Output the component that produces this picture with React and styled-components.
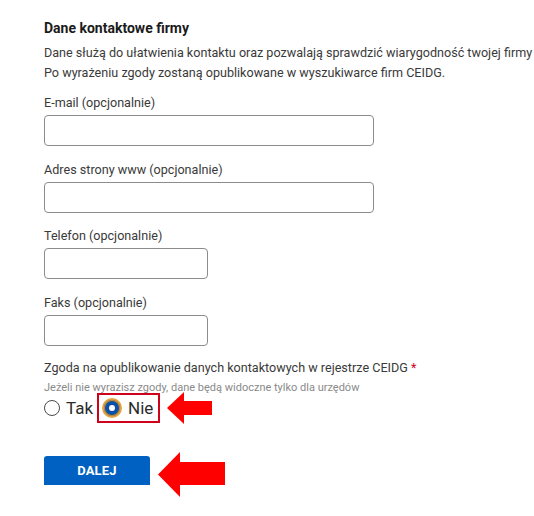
import React from "react";
import styled, { createGlobalStyle } from "styled-components";

const Global = createGlobalStyle`
  html, body { margin: 0; padding: 0; background: #fff; }
  body { font-family: Roboto, "Noto Sans", Arial, sans-serif; color: #333; }
  * { box-sizing: border-box; }
`;

const Page = styled.div`
  padding: 18px 0 0 44px;
  width: 534px;
  overflow: hidden;
`;

const Heading = styled.h2`
  margin: 0;
  font-size: 14px;
  line-height: 20px;
  font-weight: 700;
  color: #1b1b1b;
`;

const Intro = styled.p`
  margin: 5px 0 0;
  font-size: 12.6px;
  line-height: 20px;
  color: #3a3a3a;
  white-space: nowrap;
`;

const Field = styled.div`
  display: flex;
  flex-direction: column;
  margin-top: ${(p) => p.$top}px;
`;

const Label = styled.label`
  font-size: 12.6px;
  line-height: 20px;
  color: #3a3a3a;
  margin-bottom: 2px;
`;

const Input = styled.input`
  width: ${(p) => (p.$short ? 164 : 330)}px;
  height: 31px;
  border: 1px solid #8c8c8c;
  border-radius: 4px;
  background: #fff;
  font: inherit;
  padding: 0 8px;
`;

const Required = styled.span`
  color: #d0021b;
`;

const Hint = styled.div`
  font-size: 11px;
  line-height: 16px;
  color: #8a8a8a;
`;

const RadioRow = styled.div`
  display: flex;
  align-items: center;
  height: 31px;
  margin-top: -4px;
`;

const Option = styled.label`
  display: flex;
  align-items: center;
  gap: 6px;
  font-size: 17px;
  line-height: 20px;
  color: #2b2b2b;
`;

const Highlight = styled.div`
  display: flex;
  align-items: center;
  height: 30px;
  padding: 0 5px 0 3px;
  margin-left: 4px;
  border: 2px solid #d0021b;
`;

const Circle = styled.span`
  width: ${(p) => (p.$checked ? 20 : 16)}px;
  height: ${(p) => (p.$checked ? 20 : 16)}px;
  border-radius: 50%;
  display: flex;
  align-items: center;
  justify-content: center;
  ${(p) =>
    p.$checked
      ? `background: #0a4fa8; border: 2px solid #e2a440; box-shadow: inset 0 0 0 1px #c98a2a;`
      : `background: #fff; border: 1px solid #4a4a4a;`}
`;

const Dot = styled.span`
  width: 6px;
  height: 6px;
  border-radius: 50%;
  background: #fff;
`;

const ButtonRow = styled.div`
  display: flex;
  align-items: center;
  margin-top: 21px;
`;

const Button = styled.button`
  width: 106px;
  height: 29px;
  border: none;
  border-radius: 3px 3px 0 0;
  background: #0061c3;
  color: #fff;
  font-family: Roboto, Arial, sans-serif;
  font-size: 13px;
  font-weight: 700;
  letter-spacing: 0.2px;
`;

const Arrow = styled.svg`
  display: block;
  flex: none;
  margin-left: ${(p) => p.$ml}px;
  margin-top: ${(p) => p.$mt || 0}px;
`;

const RedArrow = ({ w, h, shaftTop, shaftBottom, head, ml, mt }) => (
  <Arrow width={w} height={h} viewBox={`0 0 ${w} ${h}`} $ml={ml} $mt={mt}>
    <polygon
      fill="#ff0000"
      points={`0,${h / 2} ${head},0 ${head},${shaftTop} ${w},${shaftTop} ${w},${shaftBottom} ${head},${shaftBottom} ${head},${h}`}
    />
  </Arrow>
);

export default function App() {
  return (
    <>
      <Global />
      <Page>
        <Heading>Dane kontaktowe firmy</Heading>
        <Intro>
          Dane służą do ułatwienia kontaktu oraz pozwalają sprawdzić wiarygodność twojej firmy
          <br />
          Po wyrażeniu zgody zostaną opublikowane w wyszukiwarce firm CEIDG.
        </Intro>

        <Field $top={10}>
          <Label>E-mail (opcjonalnie)</Label>
          <Input type="text" />
        </Field>
        <Field $top={14}>
          <Label>Adres strony www (opcjonalnie)</Label>
          <Input type="text" />
        </Field>
        <Field $top={13}>
          <Label>Telefon (opcjonalnie)</Label>
          <Input type="text" $short />
        </Field>
        <Field $top={14}>
          <Label>Faks (opcjonalnie)</Label>
          <Input type="text" $short />
        </Field>

        <Field $top={12}>
          <Label>
            Zgoda na opublikowanie danych kontaktowych w rejestrze CEIDG <Required>*</Required>
          </Label>
          <Hint>Jeżeli nie wyrazisz zgody, dane będą widoczne tylko dla urzędów</Hint>
        </Field>
        <RadioRow>
          <Option>
            <Circle />
            Tak
          </Option>
          <Highlight>
            <Option>
              <Circle $checked>
                <Dot />
              </Circle>
              Nie
            </Option>
          </Highlight>
          <RedArrow w={45} h={32} shaftTop={9} shaftBottom={23} head={17} ml={7} />
        </RadioRow>

        <ButtonRow>
          <Button>DALEJ</Button>
          <RedArrow w={67} h={45} shaftTop={10} shaftBottom={33} head={22} ml={8} mt={8} />
        </ButtonRow>
      </Page>
    </>
  );
}
